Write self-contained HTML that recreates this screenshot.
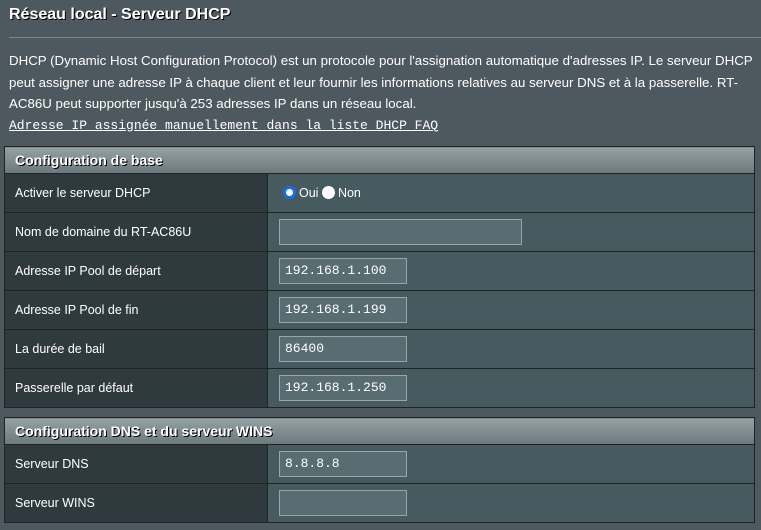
<html><head><style>
body{margin:0;width:761px;height:530px;background:#4d595e;font-family:"Liberation Sans",sans-serif;color:#fff;overflow:hidden;position:relative}
.t{position:absolute;left:9px;top:6px;font-size:16px;font-weight:bold;text-shadow:1px 1px 0 #000}
.hr{position:absolute;left:9px;right:0;top:37px;border-top:1px solid #7a878c}
.d{position:absolute;left:9px;top:50px;width:750px;font-size:13.3px;line-height:21.5px;color:#fff}
.l{font-family:"Liberation Mono",monospace;text-decoration:underline;font-size:13px}
table{position:absolute;left:4px;width:751px;border-collapse:collapse;border:1px solid #222}
td,th{border:1px solid #222;height:39px;font-size:12.5px;padding:0 0 0 10px;text-align:left}
th{height:27px;background:linear-gradient(#95a2a5,#6b787c);font-size:14px;text-shadow:1px 1px 0 #000}
td.a{background:#2f3a3e;width:252px}
td.b{background:#475a5f;padding-left:15px}
.i{display:inline-block;width:128px;height:26px;box-sizing:border-box;border:1px solid #9aa6a6;background:#586c71;font-family:"Liberation Mono",monospace;font-size:13px;line-height:24px;padding-left:5px;vertical-align:middle;margin-left:-4px}
.r{display:inline-block;width:13px;height:13px;border-radius:50%;background:#fff;vertical-align:-2px;margin-right:3px;box-sizing:border-box}
</style></head><body>
<div class="t">Réseau local - Serveur DHCP</div>
<div class="hr"></div>
<div class="d">DHCP (Dynamic Host Configuration Protocol) est un protocole pour l'assignation automatique d'adresses IP. Le serveur DHCP peut assigner une adresse IP à chaque client et leur fournir les informations relatives au serveur DNS et à la passerelle. RT-AC86U peut supporter jusqu'à 253 adresses IP dans un réseau local.<br><span class="l">Adresse IP assignée manuellement dans la liste DHCP FAQ</span></div>
<table style="top:146px">
<tr><th colspan="2">Configuration de base</th></tr>
<tr><td class="a">Activer le serveur DHCP</td><td class="b"><span class="r" style="border:3px solid #1a6fe0"></span>Oui <span class="r"></span>Non</td></tr>
<tr><td class="a">Nom de domaine du RT-AC86U</td><td class="b"><span class="i" style="width:243px"></span></td></tr>
<tr><td class="a">Adresse IP Pool de départ</td><td class="b"><span class="i">192.168.1.100</span></td></tr>
<tr><td class="a">Adresse IP Pool de fin</td><td class="b"><span class="i">192.168.1.199</span></td></tr>
<tr><td class="a">La durée de bail</td><td class="b"><span class="i">86400</span></td></tr>
<tr><td class="a">Passerelle par défaut</td><td class="b"><span class="i">192.168.1.250</span></td></tr>
</table>
<table style="top:417px">
<tr><th colspan="2">Configuration DNS et du serveur WINS</th></tr>
<tr><td class="a">Serveur DNS</td><td class="b"><span class="i">8.8.8.8</span></td></tr>
<tr><td class="a">Serveur WINS</td><td class="b"><span class="i"></span></td></tr>
</table>
</body></html>
